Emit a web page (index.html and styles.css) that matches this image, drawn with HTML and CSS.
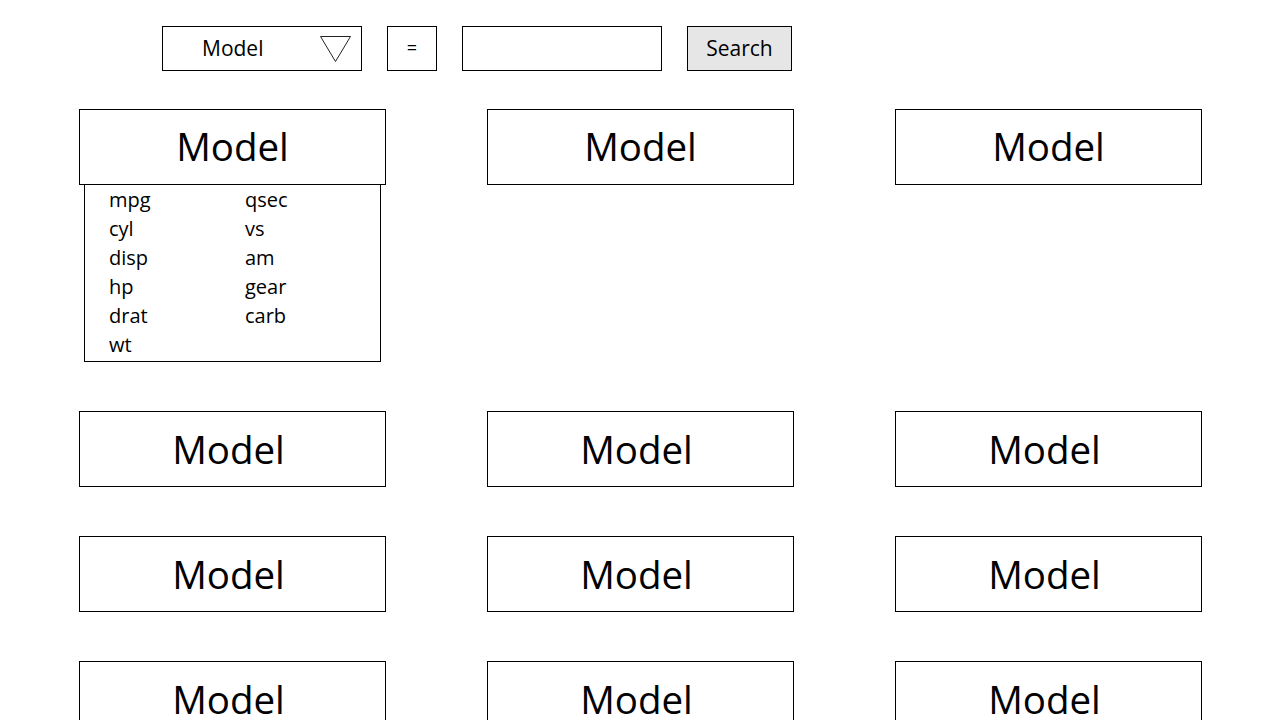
FILE: index.html
```html
<!DOCTYPE html>
<html lang="en">
<head>
<meta charset="UTF-8">
<meta name="viewport" content="width=device-width, initial-scale=1.0">
<title>Model search</title>
<link rel="stylesheet" href="styles.css">
</head>
<body>

<!-- search bar -->
<div class="search-bar">
    <div class="select">
        <span>Model</span>
        <svg class="arrow" width="31" height="26" viewBox="0 0 31 26">
            <polygon points="0.5,0.5 30.5,0.5 15.5,25.5" fill="none" stroke="#222" stroke-width="1"/>
        </svg>
    </div>
    <div class="op">=</div>
    <div class="field"></div>
    <div class="search-btn">Search</div>
</div>

<!-- model cards -->
<div class="grid">
    <div class="cell">
        <div class="card">Model</div>
        <div class="dropdown">
            <span>mpg</span>
            <span>cyl</span>
            <span>disp</span>
            <span>hp</span>
            <span>drat</span>
            <span>wt</span>
            <span>qsec</span>
            <span>vs</span>
            <span>am</span>
            <span>gear</span>
            <span>carb</span>
        </div>
    </div>
    <div class="cell"><div class="card">Model</div></div>
    <div class="cell"><div class="card">Model</div></div>

    <div class="cell"><div class="card shift">Model</div></div>
    <div class="cell"><div class="card shift">Model</div></div>
    <div class="cell"><div class="card shift">Model</div></div>

    <div class="cell"><div class="card shift">Model</div></div>
    <div class="cell"><div class="card shift">Model</div></div>
    <div class="cell"><div class="card shift">Model</div></div>

    <div class="cell"><div class="card shift">Model</div></div>
    <div class="cell"><div class="card shift">Model</div></div>
    <div class="cell"><div class="card shift">Model</div></div>
</div>

</body>
</html>
```

FILE: styles.css
```css
body {
    margin: 0;
    background: #fff;
    color: #000;
    font-family: "Open Sans", "Noto Sans", sans-serif;
}
.search-bar {
    display: flex;
    gap: 25px;
    padding: 26px 0 0 162px;
}
.search-bar > div {
    height: 45px;
    box-sizing: border-box;
    border: 1px solid #000;
    display: flex;
    align-items: center;
    font-size: 21px;
}
.select {
    width: 200px;
    padding: 0 10px 2px 39px;
    justify-content: space-between;
}
.select .arrow {
    display: block;
    margin-top: 2px;
}
.op {
    width: 50px;
    justify-content: center;
    font-size: 18px !important;
    padding-bottom: 3px;
}
.field {
    width: 200px;
}
.search-btn {
    width: 105px;
    justify-content: center;
    background: #e6e6e6;
    padding-bottom: 2px;
}
.grid {
    display: grid;
    grid-template-columns: repeat(3, 307px);
    column-gap: 101px;
    row-gap: 49px;
    align-items: start;
    padding: 38px 0 0 79px;
}
.card {
    height: 76px;
    box-sizing: border-box;
    border: 1px solid #000;
    display: flex;
    align-items: center;
    justify-content: center;
    font-size: 38.5px;
    padding-bottom: 3px;
}
.card.shift {
    padding: 0 8px 0 0;
}
.dropdown {
    margin: 0 5px;
    height: 177px;
    box-sizing: border-box;
    border: 1px solid #000;
    border-top: none;
    padding: 0 0 0 24px;
    display: grid;
    grid-template-columns: 136px auto;
    grid-template-rows: repeat(6, 29px);
    grid-auto-flow: column;
    font-size: 20px;
    line-height: 29px;
}
```
